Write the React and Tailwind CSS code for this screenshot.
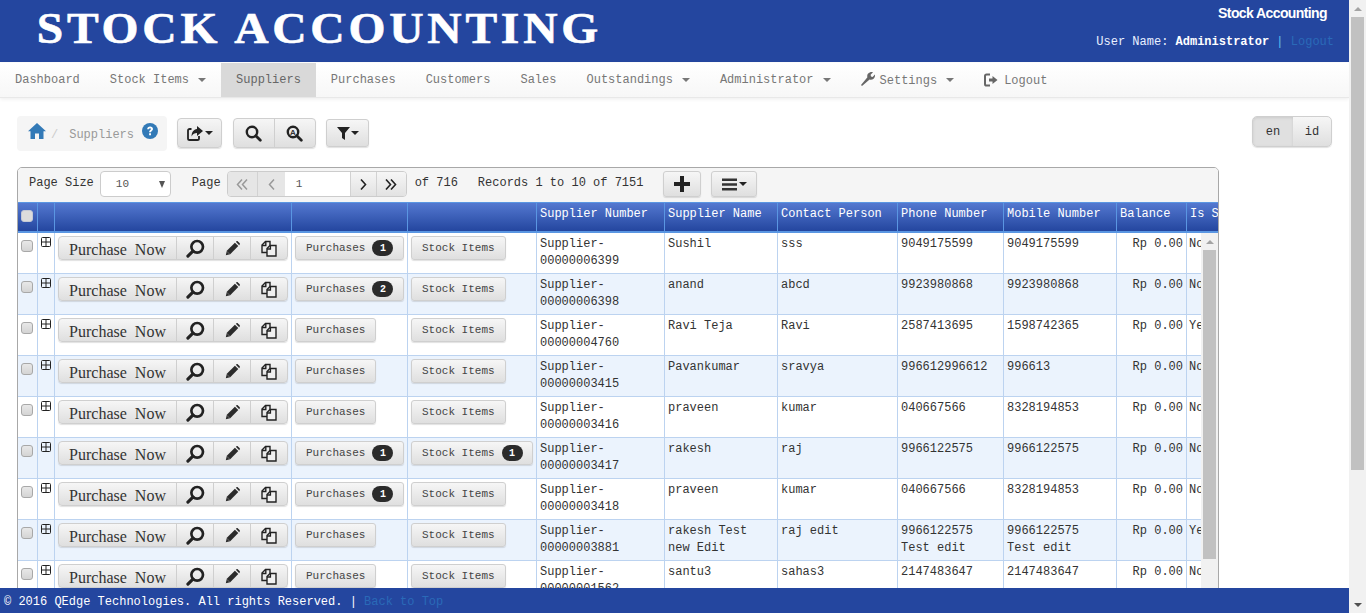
import React from "react";

const mono = "font-['Liberation_Mono','Courier_New',monospace]";
const btn = "bg-linear-to-b from-[#f6f6f6] to-[#dfdfdf] border border-[#cfcfcf] shadow-[0_1px_1px_rgba(0,0,0,0.12)]";

const Caret = ({ c = "border-t-[#777]" }) => (
  <span className={`inline-block w-0 h-0 border-x-[4px] border-x-transparent border-t-[4px] ${c}`} />
);

const NavItem = ({ children, caret, active, icon }) => (
  <div className={`h-[34px] flex items-center px-[15px] ${active ? "bg-[#d9d9d9] text-[#666]" : "text-[#777]"}`}>
    {icon}
    <span>{children}</span>
    {caret && <span className="ml-[9px] flex"><Caret /></span>}
  </div>
);

const SearchIcon = ({ flip, size = 17, children }) => (
  <svg width={size} height={size} viewBox="0 0 17 17" className={flip ? "-scale-x-100" : ""}>
    <circle cx="7" cy="7" r="5.2" fill="none" stroke="#222" strokeWidth="2.4" />
    <path d="M10.8 10.8 15.3 15.3" stroke="#222" strokeWidth="2.8" strokeLinecap="round" />
    {children}
  </svg>
);

const Pencil = () => (
  <svg width="15" height="15" viewBox="0 0 15 15">
    <path d="M0.8 14.2 1.8 9.8 9.9 1.7 13.3 5.1 5.2 13.2Z" fill="#2b2b2b" />
    <path d="M10.8 0.8 11.6 0.3C12 0 12.5 0 12.9 0.4L14.6 2.1C15 2.5 15 3 14.7 3.4L14.2 4.2Z" fill="#2b2b2b" />
    <path d="M1.8 10.3 4.7 13.2" stroke="#fff" strokeWidth="0.6" opacity="0.5" />
  </svg>
);

const Copy = () => (
  <svg width="16" height="17" viewBox="0 0 16 17" fill="none" stroke="#222" strokeWidth="1.4">
    <path d="M6 12.5H1V5L4.5 1.5H9V5" />
    <path d="M1 5.5H4.8V1.5" />
    <path d="M6 16V8.5L9 5.5H15V16Z" fill="#f0f0f0" />
    <path d="M6 9H9.4V5.5" />
  </svg>
);

const Badge = ({ n }) => (
  <span className="ml-[7px] inline-flex items-center justify-center w-[21px] h-[16px] rounded-[8px] bg-[#2b2b2b] text-white font-bold text-[10px]">{n}</span>
);

const Expand = () => (
  <svg width="10" height="10" viewBox="0 0 10 10" className="block">
    <rect x="0.5" y="0.5" width="9" height="9" rx="1" fill="none" stroke="#222" />
    <path d="M5 1V9M1 5H9" stroke="#222" />
  </svg>
);

const Check = ({ light }) => (
  <span className={`block w-[12px] h-[12px] rounded-[3px] border ${light ? "bg-[#dcdcdc] border-[#c4c9d6]" : "bg-linear-to-b from-[#e8e8e8] to-[#d4d4d4] border-[#a8a8a8]"}`} />
);

const rows = [
  ["00000006399", "Sushil", "sss", "9049175599", "9049175599", "No", 1, 0],
  ["00000006398", "anand", "abcd", "9923980868", "9923980868", "No", 2, 0],
  ["00000004760", "Ravi Teja", "Ravi", "2587413695", "1598742365", "Yes", 0, 0],
  ["00000003415", "Pavankumar", "sravya", "996612996612", "996613", "No", 0, 0],
  ["00000003416", "praveen", "kumar", "040667566", "8328194853", "No", 0, 0],
  ["00000003417", "rakesh", "raj", "9966122575", "9966122575", "No", 1, 1],
  ["00000003418", "praveen", "kumar", "040667566", "8328194853", "No", 1, 0],
  ["00000003881", "rakesh Test new Edit", "raj edit", "9966122575 Test edit", "9966122575 Test edit", "Yes", 0, 0],
  ["00000001562", "santu3", "sahas3", "2147483647", "2147483647", "No", 0, 0],
];

const widths = [20, 17, 237, 116, 129, 128, 113, 120, 106, 113, 70, 100];
const heads = ["", "", "", "", "", "Supplier Number", "Supplier Name", "Contact Person", "Phone Number", "Mobile Number", "Balance", "Is Supplier"];

const td = "border-r border-b border-[#bcd3f0] align-top p-0 h-[41px]";
const txt = "px-[3px] pt-[3px] leading-[17px] text-[#333]";

function Row({ r, i }) {
  return (
    <tr className={i % 2 ? "bg-[#ebf3fd]" : "bg-white"}>
      <td className={td}><div className="pl-[3px] pt-[7px]"><Check /></div></td>
      <td className={td}><div className="pl-[3px] pt-[4px]"><Expand /></div></td>
      <td className={td}>
        <div className="pl-[3px] pt-[3px]">
          <div className={`flex w-[230px] h-[24px] rounded-[4px] ${btn}`}>
            <div className="w-[118px] flex items-center justify-center font-['Liberation_Serif',serif] text-[16px] text-[#333] [word-spacing:4px] border-r border-[#cfcfcf] pt-[3px]">Purchase Now</div>
            <div className="w-[37px] flex items-center justify-center border-r border-[#cfcfcf]"><SearchIcon flip size={19} /></div>
            <div className="w-[37px] flex items-center justify-center border-r border-[#cfcfcf]"><Pencil /></div>
            <div className="w-[36px] flex items-center justify-center"><Copy /></div>
          </div>
        </div>
      </td>
      <td className={td}>
        <div className="pl-[3px] pt-[3px]">
          <div className={`inline-flex items-center h-[24px] rounded-[3px] pl-[10px] ${r[6] ? "w-[109px]" : "w-[81px]"} text-[11px] text-[#444] ${btn}`}>
            Purchases{r[6] ? <Badge n={r[6]} /> : null}
          </div>
        </div>
      </td>
      <td className={td}>
        <div className="pl-[3px] pt-[3px]">
          <div className={`inline-flex items-center h-[24px] rounded-[3px] pl-[10px] ${r[7] ? "w-[122px]" : "w-[95px]"} text-[11px] text-[#444] ${btn}`}>
            Stock Items{r[7] ? <Badge n={r[7]} /> : null}
          </div>
        </div>
      </td>
      <td className={td}><div className={txt}>Supplier-{r[0]}</div></td>
      <td className={td}><div className={txt}>{r[1]}</div></td>
      <td className={td}><div className={txt}>{r[2]}</div></td>
      <td className={td}><div className={txt}>{r[3]}</div></td>
      <td className={td}><div className={txt}>{r[4]}</div></td>
      <td className={td}><div className={`${txt} text-right`}>Rp 0.00</div></td>
      <td className={td}><div className={`${txt} pl-[2px]`}>{r[5]}</div></td>
    </tr>
  );
}

export default function App() {
  return (
    <div className={`relative flex w-[1366px] h-[613px] overflow-hidden bg-white text-[12px] ${mono}`}>
      <div className="w-[1349px] shrink-0">
        {/* header */}
        <header className="h-[62px] bg-[#24469f] flex justify-between overflow-hidden">
          <div className="pl-[34px] pt-[4px] font-['Liberation_Serif',serif] font-bold text-white text-[44px] leading-[50px] tracking-[3.5px] whitespace-nowrap origin-left scale-x-[1.08] [-webkit-text-stroke:0.6px_white]">STOCK ACCOUNTING</div>
          <div className="pr-[15px] flex flex-col items-end">
            <div className="pr-[7px] pt-[5px] font-['Liberation_Sans',Arial,sans-serif] font-bold text-white text-[14px] leading-[16px] tracking-[-0.6px]">Stock Accounting</div>
            <div className="mt-[13px] leading-[17px] text-[#e8f0ff] whitespace-pre">User Name: <b className="text-white">Administrator</b><span className="text-[#5cc0ee]"> | </span><span className="text-[#2a6ab8]">Logout</span></div>
          </div>
        </header>
        {/* nav */}
        <nav className="mt-px h-[35px] flex bg-linear-to-b from-white to-[#f7f7f7] border-b border-[#e8e8e8] shadow-[0_1px_4px_rgba(0,0,0,0.08)]">
          <NavItem>Dashboard</NavItem>
          <NavItem caret>Stock Items</NavItem>
          <NavItem active>Suppliers</NavItem>
          <NavItem>Purchases</NavItem>
          <NavItem>Customers</NavItem>
          <NavItem>Sales</NavItem>
          <NavItem caret>Outstandings</NavItem>
          <NavItem caret>Administrator</NavItem>
          <NavItem caret icon={
            <svg width="14" height="14" viewBox="0 0 14 14" className="mr-[5px] -mt-[2px]">
              <path d="M1 14 0 13 6.4 5.2C5.8 3.2 6.6 1 9.2 0.2 10.2-0.1 11.2 0 12 0.3L9.6 2.7 10 4.6 11.6 5 13.9 2.6C14.2 4 13.9 5.6 12.6 6.8 11.4 7.8 9.9 8 8.6 7.6Z" fill="#666" />
            </svg>
          }><span className="relative top-px">Settings</span></NavItem>
          <NavItem icon={
            <svg width="14" height="14" viewBox="0 0 14 14" className="mr-[6px]" fill="none">
              <path d="M6 1.5H2.6C1.7 1.5 1 2.2 1 3.1V10.9C1 11.8 1.7 12.5 2.6 12.5H6" stroke="#666" strokeWidth="2" />
              <path d="M5 5.5H8.5V3L13.5 7 8.5 11V8.5H5Z" fill="#666" />
            </svg>
          }><span className="relative top-px">Logout</span></NavItem>
        </nav>

        {/* main */}
        <main className="px-[17px]">
          <div className="flex items-start pt-[18px]">
            <div className="w-[150px] h-[35px] rounded-[4px] bg-[#f5f5f5] flex items-start pl-[11px] pt-[7px]">
              <svg width="18" height="16" viewBox="0 0 18 16">
                <path d="M9 0 18 8.2H15.5V16H11V10.5H7V16H2.5V8.2H0Z" fill="#337ab7" />
              </svg>
              <span className="ml-[5px] mt-[3px] text-[#ccc]">/</span>
              <span className="ml-[11px] mt-[4px] text-[#999] leading-[17px]">Suppliers</span>
              <svg width="16" height="16" viewBox="0 0 16 16" className="ml-[8px]">
                <circle cx="8" cy="8" r="8" fill="#337ab7" />
                <path d="M5.2 6.2C5.2 4.4 6.4 3.4 8.1 3.4 9.8 3.4 11 4.4 11 5.9 11 7.6 9 7.8 9 9.3H7.1C7.1 7.2 8.9 7 8.9 6 8.9 5.5 8.6 5.2 8 5.2 7.4 5.2 7.1 5.6 7.1 6.2Z M7.1 10.2H9V12.3H7.1Z" fill="#fff" />
              </svg>
            </div>
            <div className={`ml-[10px] mt-[2px] w-[45px] h-[30px] rounded-[4px] flex items-center justify-center gap-[2px] ${btn}`}>
              <svg width="16" height="15" viewBox="0 0 16 15">
                <path d="M4.5 3H2.6C1.7 3 1 3.7 1 4.6V12.4C1 13.3 1.7 14 2.6 14H10.4C11.3 14 12 13.3 12 12.4V10" fill="none" stroke="#222" strokeWidth="1.8" />
                <path d="M10 0 16 5 10 10V7C7.5 7 5.8 8 4.6 10.4 4.6 6.4 6.6 3.5 10 3.1Z" fill="#222" />
              </svg>
              <Caret c="border-t-[#222]" />
            </div>
            <div className={`ml-[11px] mt-[2px] w-[83px] h-[30px] rounded-[4px] flex ${btn}`}>
              <div className="w-[41px] flex items-center justify-center border-r border-[#cfcfcf]"><SearchIcon /></div>
              <div className="w-[41px] flex items-center justify-center">
                <SearchIcon>
                  <text x="7" y="9.8" textAnchor="middle" fontSize="8" fontWeight="700" fill="#333" fontFamily="'Liberation Sans',sans-serif">A</text>
                </SearchIcon>
              </div>
            </div>
            <div className={`ml-[10px] mt-[3px] w-[43px] h-[28px] rounded-[3px] flex items-center justify-center gap-px ${btn}`}>
              <svg width="13" height="13" viewBox="0 0 13 13">
                <path d="M0 0H13L8 6V13L5 11V6Z" fill="#222" />
              </svg>
              <Caret c="border-t-[#222]" />
            </div>
            <div className={`ml-auto w-[80px] h-[31px] rounded-[5px] flex ${btn}`}>
              <div className="w-[40px] flex items-center justify-center bg-[#e0e0e0] rounded-l-[4px] text-[#333] shadow-[inset_0_1px_3px_rgba(0,0,0,0.1)]">en</div>
              <div className="flex-1 flex items-center justify-center text-[#333]">id</div>
            </div>
          </div>

          {/* panel */}
          <div className="relative mt-[16px] w-[1202px] h-[500px] border border-[#a8a8a8] rounded-t-[5px] overflow-hidden">
            <div className="h-[34px] bg-[#f5f5f5] flex items-start text-[#333] pl-[11px]">
              <span className="mt-[7px] leading-[17px] whitespace-pre">Page Size</span>
              <div className="ml-[6px] mt-[3px] w-[71px] h-[26px] rounded-[4px] border border-[#ccc] bg-white flex items-center justify-between pl-[15px] pr-[5px] text-[11px] text-[#555]">
                <span>10</span>
                <span className="w-0 h-0 border-x-[3.5px] border-x-transparent border-t-[7px] border-t-[#555]" />
              </div>
              <span className="ml-[21px] mt-[7px] leading-[17px]">Page</span>
              <div className="ml-[6px] mt-[3px] w-[180px] h-[26px] rounded-[4px] border border-[#ccc] flex overflow-hidden">
                <div className="w-[30px] bg-[#e6e6e6] border-r border-[#d2d2d2] flex items-center justify-center">
                  <svg width="12" height="11" viewBox="0 0 12 11" fill="none" stroke="#999" strokeWidth="1.5"><path d="M6 0.5 1.5 5.5 6 10.5M11 0.5 6.5 5.5 11 10.5" /></svg>
                </div>
                <div className="w-[27px] bg-[#e6e6e6] flex items-center justify-center">
                  <svg width="7" height="11" viewBox="0 0 7 11" fill="none" stroke="#999" strokeWidth="1.5"><path d="M6 0.5 1.5 5.5 6 10.5" /></svg>
                </div>
                <div className="w-[65px] bg-white pl-[11px] flex items-center text-[11px] text-[#555]">1</div>
                <div className="w-[27px] flex items-center justify-center border-l border-r border-[#d2d2d2] bg-linear-to-b from-[#f6f6f6] to-[#e2e2e2]">
                  <svg width="7" height="11" viewBox="0 0 7 11" fill="none" stroke="#222" strokeWidth="1.6"><path d="M1 0.5 5.5 5.5 1 10.5" /></svg>
                </div>
                <div className="flex-1 flex items-center justify-center bg-linear-to-b from-[#f6f6f6] to-[#e2e2e2]">
                  <svg width="12" height="11" viewBox="0 0 12 11" fill="none" stroke="#222" strokeWidth="1.6"><path d="M1 0.5 5.5 5.5 1 10.5M6 0.5 10.5 5.5 6 10.5" /></svg>
                </div>
              </div>
              <span className="ml-[8px] mt-[7px] leading-[17px]">of 716</span>
              <span className="ml-[20px] mt-[7px] leading-[17px] whitespace-nowrap">Records 1 to 10 of 7151</span>
              <div className={`ml-[20px] mt-[3px] w-[38px] h-[26px] rounded-[3px] flex items-center justify-center ${btn}`}>
                <svg width="16" height="16" viewBox="0 0 16 16"><path d="M6 0H10V6H16V10H10V16H6V10H0V6H6Z" fill="#222" /></svg>
              </div>
              <div className={`ml-[10px] mt-[3px] w-[46px] h-[26px] rounded-[3px] flex items-center justify-center gap-[2px] ${btn}`}>
                <svg width="15" height="13" viewBox="0 0 15 13"><path d="M0 0.5H15V3H0ZM0 5.2H15V7.7H0ZM0 10H15V12.5H0Z" fill="#333" /></svg>
                <Caret c="border-t-[#222]" />
              </div>
            </div>

            <table className="table-fixed w-[1269px] border-separate border-spacing-0">
              <colgroup>
                {widths.map((w, i) => <col key={i} style={{ width: w }} />)}
              </colgroup>
              <thead>
                <tr>
                  {heads.map((h, i) => (
                    <th key={i} className="h-[31px] p-0 pl-[3px] pt-[3px] align-top text-left font-normal text-white whitespace-nowrap leading-[17px] bg-linear-to-b from-[#5478d0] to-[#24469f] border-t border-b-2 border-r border-[#5a96e2]">
                      {i === 0 ? <div className="pt-[4px]"><Check light /></div> : h}
                    </th>
                  ))}
                </tr>
              </thead>
              <tbody>
                {rows.map((r, i) => <Row key={i} r={r} i={i} />)}
              </tbody>
            </table>

            {/* inner scrollbar */}
            <div className="absolute right-0 top-[65px] bottom-0 w-[17px] bg-[#f1f1f1] flex flex-col items-center">
              <div className="h-[17px] flex items-center justify-center">
                <span className="w-0 h-0 border-x-[4px] border-x-transparent border-b-[4px] border-b-[#a3a3a3]" />
              </div>
              <div className="w-[13px] h-[309px] bg-[#c1c1c1]" />
            </div>
          </div>
        </main>
      </div>

      {/* page scrollbar */}
      <div className="w-[17px] h-full bg-[#f1f1f1] flex flex-col items-center">
        <div className="h-[17px] flex items-center justify-center">
          <span className="w-0 h-0 border-x-[4px] border-x-transparent border-b-[4px] border-b-[#a3a3a3]" />
        </div>
        <div className="w-[13px] h-[453px] bg-[#c1c1c1]" />
        <div className="mt-auto h-[17px] flex items-center justify-center">
          <span className="w-0 h-0 border-x-[4px] border-x-transparent border-t-[4px] border-t-[#505050]" />
        </div>
      </div>

      {/* footer */}
      <footer className="absolute left-0 bottom-0 w-[1349px] h-[25px] bg-[#24469f] pl-[4px] pt-[2px] flex items-center text-white whitespace-pre">
        © 2016 QEdge Technologies. All rights Reserved. | <span className="text-[#2a6ab8]">Back to Top</span>
      </footer>
    </div>
  );
}
